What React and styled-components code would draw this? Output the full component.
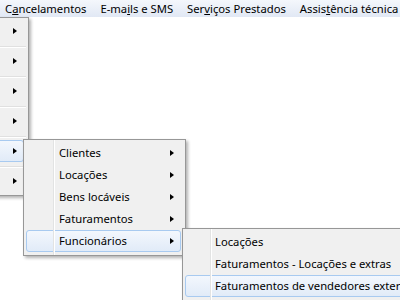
import React from 'react';
import styled, { createGlobalStyle } from 'styled-components';

const Global = createGlobalStyle`
  html, body { margin: 0; padding: 0; background: #fff; }
  body { font-family: "Noto Sans", "DejaVu Sans", sans-serif; }
`;

const Screen = styled.div`
  position: relative;
  width: 400px;
  height: 300px;
  overflow: hidden;
  background: #fff;
  font-family: "Noto Sans", "DejaVu Sans", sans-serif;
  font-size: 11.25px;
  color: #000;
`;

const MenuBar = styled.div`
  height: 17px;
  display: flex;
  align-items: center;
  gap: 14px;
  padding-left: 5px;
  white-space: nowrap;
  background: linear-gradient(#f4f7fc, #e1e8f4);
`;

const BarItem = styled.span`
  line-height: 17px;
`;

const Key = styled.span`
  text-decoration: underline;
  text-underline-offset: 1px;
`;

const Popup = styled.div`
  position: absolute;
  left: ${p => p.$left}px;
  top: ${p => p.$top}px;
  width: ${p => p.$width}px;
  box-sizing: border-box;
  display: flex;
  flex-direction: column;
  padding: 2px 4px 3px 2px;
  background: #f0f0f0;
  border: 1px solid #979797;
  box-shadow: 2px 2px 3px rgba(0, 0, 0, 0.3);
  white-space: nowrap;

  &::before {
    content: "";
    display: ${p => (p.$gutter == null ? 'none' : 'block')};
    position: absolute;
    top: 0;
    bottom: 0;
    left: ${p => p.$gutter}px;
    width: 1px;
    background: #e2e3e3;
    border-right: 1px solid #ffffff;
    z-index: 1;
  }
`;

const Item = styled.div`
  height: 22px;
  box-sizing: border-box;
  display: flex;
  align-items: center;
  padding-left: ${p => p.$indent}px;
  padding-right: 6px;
  border: 1px solid ${p => (p.$active ? '#a8caf0' : 'transparent')};
  border-radius: 3px;
  background: ${p =>
    p.$active ? 'linear-gradient(#f3f7fd, #e1ebf8)' : 'transparent'};
`;

const Label = styled.span`
  flex: 1;
  line-height: 20px;
`;

const Arrow = styled.span`
  width: 0;
  height: 0;
  border-left: 4px solid #000;
  border-top: 3.5px solid transparent;
  border-bottom: 3.5px solid transparent;
`;

const Separator = styled.div`
  height: 8px;
  position: relative;

  &::after {
    content: "";
    position: absolute;
    left: 0;
    right: -2px;
    top: 4px;
    height: 1px;
    background: #e0e0e0;
    border-bottom: 1px solid #ffffff;
  }
`;

const rootItems = [false, false, false, false, true, false];

const cadastroItems = [
  { label: 'Clientes' },
  { label: 'Locações' },
  { label: 'Bens locáveis' },
  { label: 'Faturamentos' },
  { label: 'Funcionários', active: true },
];

const funcItems = [
  { label: 'Locações' },
  { label: 'Faturamentos - Locações e extras' },
  { label: 'Faturamentos de vendedores externos', active: true },
];

export default function App() {
  return (
    <Screen>
      <Global />
      <MenuBar>
        <BarItem>C<Key>a</Key>ncelamentos</BarItem>
        <BarItem>E-ma<Key>i</Key>ls e SMS</BarItem>
        <BarItem>Ser<Key>v</Key>iços Prestados</BarItem>
        <BarItem>Assis<Key>t</Key>ência técnica</BarItem>
      </MenuBar>

      <Popup $left={-120} $top={17} $width={149}>
        {rootItems.map((active, i) => (
          <React.Fragment key={i}>
            {i > 0 && <Separator />}
            <Item $active={active} $indent={0}>
              <Label />
              <Arrow />
            </Item>
          </React.Fragment>
        ))}
      </Popup>

      <Popup $left={23} $top={139} $width={163} $gutter={29}>
        {cadastroItems.map(it => (
          <Item key={it.label} $active={it.active} $indent={32}>
            <Label>{it.label}</Label>
            <Arrow />
          </Item>
        ))}
      </Popup>

      <Popup $left={182} $top={228} $width={260} $gutter={27}>
        {funcItems.map(it => (
          <Item key={it.label} $active={it.active} $indent={29}>
            <Label>{it.label}</Label>
          </Item>
        ))}
      </Popup>
    </Screen>
  );
}
